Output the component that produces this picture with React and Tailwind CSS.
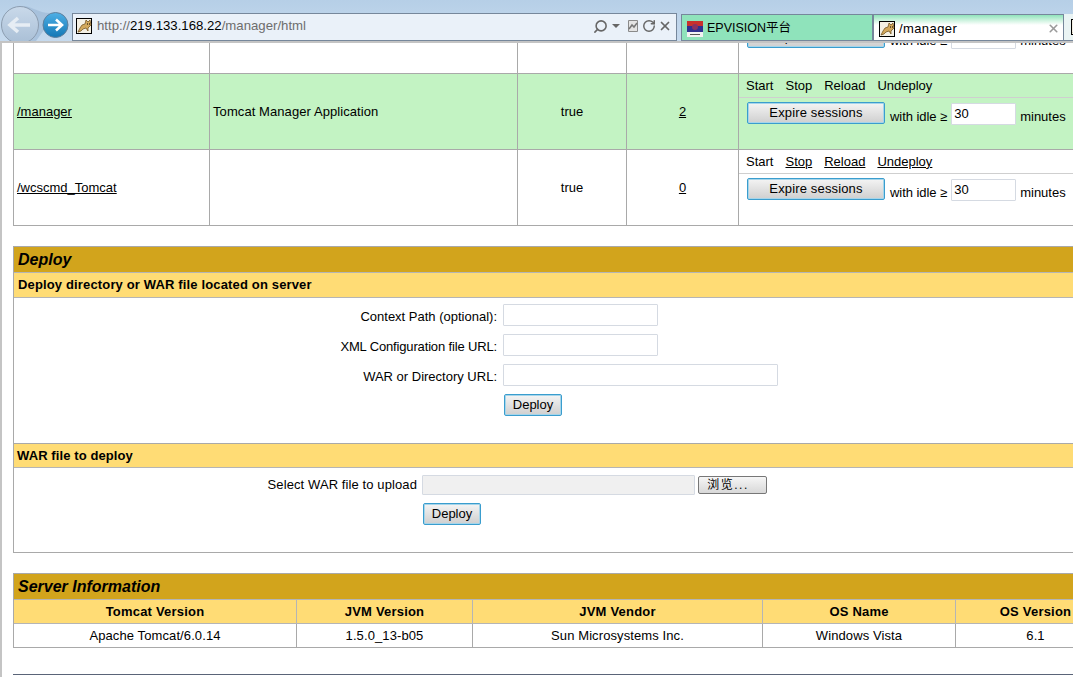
import React from "react";
import { RotateCw, Search, X } from "lucide-react";

const font = { fontFamily: '"Liberation Sans", "Noto Sans CJK SC", Arial, sans-serif' };

function TomcatIcon() {
  return (
    <svg width="16" height="16" viewBox="0 0 16 16" className="shrink-0">
      <rect x="0.5" y="0.5" width="15" height="15" fill="#f4f0e4" stroke="#000" />
      <path d="M2 14 4 10 6 7 9 6 10 2 12 4 14 2 15 7 12 10 12 13 10 10 7 11 5 13Z" fill="#d2a85c" stroke="#6a4a18" strokeWidth="0.7" />
      <path d="M11 6h1M13 6h1" stroke="#000" strokeWidth="1" />
    </svg>
  );
}

function FlagIcon() {
  return (
    <svg width="16" height="16" viewBox="0 0 16 16" className="shrink-0">
      <rect width="16" height="5" fill="#c9302c" />
      <rect y="5" width="16" height="6" fill="#2f2f8f" />
      <rect y="11" width="16" height="5" fill="#f2f2f2" />
      <circle cx="8" cy="6" r="3" fill="#8a3060" />
      <rect x="3" y="13" width="10" height="1" fill="#555" />
    </svg>
  );
}

function CompatIcon() {
  return (
    <svg width="12" height="14" viewBox="0 0 12 14" className="ml-[7px] shrink-0">
      <path d="M1.500 1.500h9v11h-9z" fill="#e4e4e4" stroke="#8a8a8a" />
      <path d="M2 10 5 6 7 8 10 4" fill="none" stroke="#777" strokeWidth="1.500" />
    </svg>
  );
}

function NavButtons() {
  return (
    <svg width="70" height="41" viewBox="0 0 70 41" className="absolute left-0 top-0">
      <defs>
        <linearGradient id="backFill" x1="0" y1="0" x2="0" y2="1">
          <stop offset="0" stopColor="#c9d9ea" />
          <stop offset="1" stopColor="#a9bfd6" />
        </linearGradient>
        <linearGradient id="nextFill" x1="0" y1="0" x2="0" y2="1">
          <stop offset="0" stopColor="#4fb0e6" />
          <stop offset="1" stopColor="#1377b5" />
        </linearGradient>
      </defs>
      <path d="M22 6C32 6 38 13 50 13L44 30 36 41 20 41Z" fill="#a3bdd8" opacity="0.8" />
      <circle cx="20" cy="25" r="18.500" fill="url(#backFill)" stroke="#8c9db0" strokeWidth="1" />
      <path d="M11 25h19M18 18l-8 7 8 7" fill="none" stroke="#e6edf4" strokeWidth="3.600" />
      <circle cx="55.500" cy="25" r="12.500" fill="url(#nextFill)" stroke="#5f7f9c" strokeWidth="1" />
      <path d="M48 25h13.500M56 19.500l6 5.500-6 5.500" fill="none" stroke="#fff" strokeWidth="2.600" />
    </svg>
  );
}

function BrowserBar() {
  return (
    <div className="relative flex h-[41px] shrink-0 items-end bg-gradient-to-b from-[#b6cfe7] to-[#c6daee] pl-[72px]">
      <NavButtons />
      <div className="flex h-[28px] w-[605px] items-center border border-[#76879b] bg-[#eaf1f9] pb-[2px] pl-[3px] pr-[4px]">
        <TomcatIcon />
        <div className="ml-[5px] text-[13.200px] text-[#6d6d6d]">
          http://<span className="text-black">219.133.168.22</span>/manager/html
        </div>
        <div className="ml-auto flex items-center text-[#666]">
          <Search size={15} strokeWidth={2.500} className="-scale-x-100" />
          <div className="ml-[4px] h-0 w-0 border-x-[4px] border-t-[4px] border-x-transparent border-t-[#666]" />
          <CompatIcon />
          <RotateCw size={14} strokeWidth={2.500} className="ml-[3px]" />
          <X size={14} strokeWidth={3} className="ml-[2px]" />
        </div>
      </div>
      <div className="ml-[4px] flex h-[27px] w-[192px] items-center gap-[4px] border border-[#76879b] bg-[#8fe3bb] pl-[5px] pt-[2px] text-[12.500px] text-black">
        <FlagIcon />
        EPVISION平台
      </div>
      <div className="flex h-[27px] w-[191px] items-center gap-[4px] border border-[#76879b] bg-gradient-to-b from-[#8fe3bb] to-white to-40% pl-[5px] pt-[2px] text-[13px] tracking-[0.4px] text-black">
        <TomcatIcon />
        /manager
        <X size={13} strokeWidth={3} className="ml-auto mr-[3px] text-[#9a9a9a]" />
      </div>
      <div className="flex h-[27px] flex-1 items-center overflow-hidden border-b border-[#76879b] bg-[#eaf4f4] pl-[7px]">
        <TomcatIcon />
      </div>
    </div>
  );
}

function FormButton({ className, children }) {
  return (
    <button className={`flex h-[22px] items-center justify-center rounded-[2px] border border-[#3a9dce] bg-gradient-to-b from-[#f4f4f4] to-[#cfcfcf] text-black shadow-[inset_0_0_0_1px_#a6d5ea] ${className}`}>
      {children}
    </button>
  );
}

function TextInput({ className, value = "" }) {
  return (
    <div className={`flex h-[22px] items-center rounded-[1px] border border-[#d5dae2] bg-white text-black ${className}`}>
      {value}
    </div>
  );
}

function SessionForm() {
  return (
    <div className="flex items-start pl-[8px] pt-[4px]">
      <FormButton className="mr-[5px] w-[138px] tracking-[0.15px]">Expire sessions</FormButton>
      <span className="mt-[5px] -tracking-[0.05px]">with idle ≥</span>
      <TextInput className="mx-[4px] mt-[1px] w-[65px] pl-[2px]" value="30" />
      <span className="mt-[5px]">minutes</span>
    </div>
  );
}

function AppRow({ path, name, sessions, bg, linkActions }) {
  const action = linkActions ? "underline" : "";
  return (
    <div className={`flex h-[76px] border-b border-[#a9a9a9] ${bg}`}>
      <div className="flex w-[196px] shrink-0 items-center border-r border-[#a9a9a9] pl-[3px] underline">{path}</div>
      <div className="flex w-[308px] shrink-0 items-center border-r border-[#a9a9a9] pl-[3px] tracking-[0.08px]">{name}</div>
      <div className="flex w-[109px] shrink-0 items-center justify-center border-r border-[#a9a9a9]">true</div>
      <div className="flex w-[112px] shrink-0 items-center justify-center border-r border-[#a9a9a9] underline">{sessions}</div>
      <div className="flex-1">
        <div className="flex h-[24px] items-center gap-[12px] border-b border-[#cfcfcf] pl-[7px]">
          <span>Start</span>
          <span className={action}>Stop</span>
          <span className={action}>Reload</span>
          <span className={action}>Undeploy</span>
        </div>
        <SessionForm />
      </div>
    </div>
  );
}

function DeployField({ label, labelClass = "", wide }) {
  return (
    <div className="mb-[8px] flex items-center">
      <div className={`w-[485px] pr-[2px] pt-[4px] text-right leading-[18px] ${labelClass}`}>{label}</div>
      <TextInput className={`ml-[4px] ${wide ? "w-[275px]" : "w-[155px]"}`} />
    </div>
  );
}

function Deploy() {
  return (
    <div className="ml-[13px] mt-[20px] border-l border-t border-[#a9a9a9]">
      <div className="h-[25px] bg-[#d2a41c] pl-[4px] text-[16px] font-bold italic leading-[25px]">Deploy</div>
      <div className="h-[26px] border-y border-[#b5b5b5] bg-[#ffdc75] pl-[4px] font-bold leading-[23px] tracking-[0.15px]">
        Deploy directory or WAR file located on server
      </div>
      <div className="h-[146px] border-b border-[#a9a9a9] pt-[6px]">
        <DeployField label="Context Path (optional):" />
        <DeployField label="XML Configuration file URL:" labelClass="-tracking-[0.15px]" />
        <DeployField label="WAR or Directory URL:" wide />
        <FormButton className="ml-[490px] w-[58px]">Deploy</FormButton>
      </div>
      <div className="h-[24px] border-b border-[#b5b5b5] bg-[#ffdc75] pl-[3px] font-bold leading-[23px] tracking-[0.1px]">WAR file to deploy</div>
      <div className="h-[85px] border-b border-[#a9a9a9] pt-[7px]">
        <div className="flex items-center">
          <div className="w-[403px] text-right tracking-[0.1px]">Select WAR file to upload</div>
          <div className="ml-[5px] h-[20px] w-[273px] rounded-[1px] border border-[#d5dae2] bg-[#f0f0f0]" />
          <div className="ml-[3px] flex h-[18px] w-[69px] items-center justify-center rounded-[2px] border border-[#777] bg-gradient-to-b from-[#f6f6f6] to-[#d8d8d8] pr-[9px] text-[12px] tracking-[1.5px]">浏览...</div>
        </div>
        <FormButton className="ml-[409px] mt-[8px] w-[58px]">Deploy</FormButton>
      </div>
    </div>
  );
}

function ServerInfo() {
  const cols = [
    ["Tomcat Version", "Apache Tomcat/6.0.14", "w-[283px]"],
    ["JVM Version", "1.5.0_13-b05", "w-[176px]"],
    ["JVM Vendor", "Sun Microsystems Inc.", "w-[290px]"],
    ["OS Name", "Windows Vista", "w-[193px]"],
    ["OS Version", "6.1", "w-[160px]"],
  ];
  return (
    <div className="ml-[13px] mt-[20px] border-l border-t border-[#a9a9a9]">
      <div className="h-[25px] bg-[#d2a41c] pl-[4px] text-[16px] font-bold italic leading-[25px]">Server Information</div>
      <div className="flex h-[25px] border-y border-[#b5b5b5] bg-[#ffdc75]">
        {cols.map(([head, , w]) => (
          <div key={head} className={`${w} shrink-0 border-r border-[#b5b5b5] text-center font-bold leading-[23px] tracking-[0.2px]`}>{head}</div>
        ))}
      </div>
      <div className="flex h-[24px] border-b border-[#a9a9a9]">
        {cols.map(([head, value, w]) => (
          <div key={head} className={`${w} shrink-0 border-r border-[#a9a9a9] text-center leading-[23px] tracking-[0.1px]`}>{value}</div>
        ))}
      </div>
    </div>
  );
}

export default function App() {
  return (
    <div style={font} className="flex h-[677px] w-[1073px] flex-col overflow-hidden bg-white text-[13px] text-black">
      <BrowserBar />
      <div className="min-h-0 flex-1 overflow-hidden border-l-2 border-t-2 border-[#c4c4c4]">
        <div className="w-[1300px]">
          <div className="-mt-[45px] ml-[11px] border-l border-[#a9a9a9]">
            <AppRow path="/" name="" sessions="" bg="bg-white" linkActions />
            <AppRow path="/manager" name="Tomcat Manager Application" sessions="2" bg="bg-[#c3f3c3]" />
            <AppRow path="/wcscmd_Tomcat" name="" sessions="0" bg="bg-white" linkActions />
          </div>
          <div className="-ml-[2px]">
            <Deploy />
            <ServerInfo />
            <div className="ml-[13px] mt-[26px] border-t border-[#5a6478]" />
          </div>
        </div>
      </div>
    </div>
  );
}
